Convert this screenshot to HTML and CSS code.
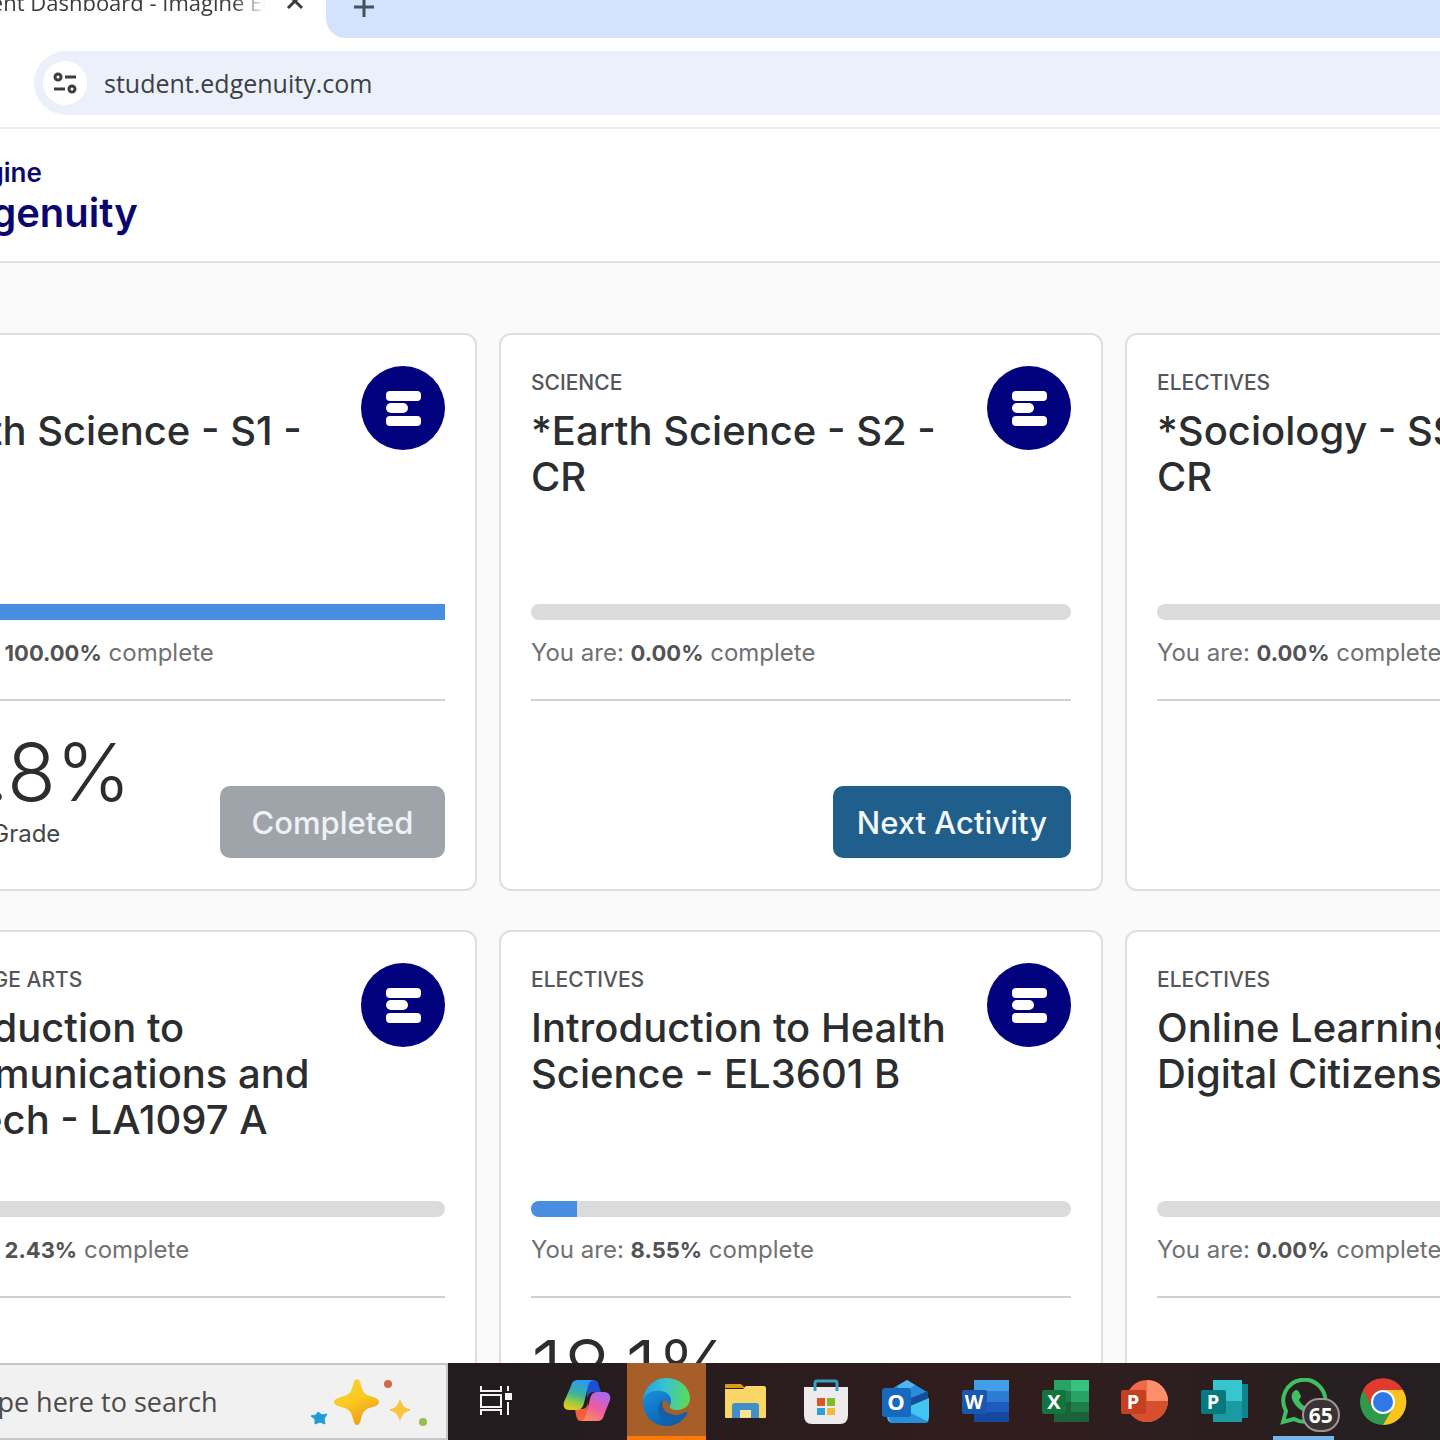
FILE: index.html
```html
<!DOCTYPE html>
<html lang="en">
<head>
<meta charset="utf-8">
<meta name="viewport" content="width=device-width, initial-scale=1">
<title>Student Dashboard - Imagine Edgenuity</title>
<link rel="stylesheet" href="styles.css">
</head>
<body>
<svg class="defs" aria-hidden="true">
  <symbol id="course-icon" viewBox="0 0 84 84">
    <circle cx="42" cy="42" r="42" fill="#02027f"/>
    <rect x="25" y="25" width="35" height="10" rx="4" fill="#fff"/>
    <rect x="25" y="37" width="22" height="10" rx="5" fill="#fff"/>
    <rect x="25" y="50" width="35" height="10" rx="4" fill="#fff"/>
  </symbol>
</svg>

<div class="browser">
  <div class="tabs">
    <div class="tab">
      <span class="tab-title">Student Dashboard - Imagine Edgenuity</span>
      <button class="tab-button" aria-label="Close tab"><svg width="18" height="18" viewBox="0 0 18 18"><path d="M2 2l14 14M16 2L2 16" stroke="#3a3c3e" stroke-width="3"/></svg></button>
    </div>
    <div class="strip">
      <button class="tab-button" aria-label="New tab"><svg width="20" height="20" viewBox="0 0 20 20"><path d="M10 0v20M0 10h20" stroke="#45505f" stroke-width="3"/></svg></button>
    </div>
  </div>
  <div class="toolbar">
    <div class="address">
      <button class="site-info" aria-label="View site information">
        <svg width="26" height="26" viewBox="0 0 26 26" fill="none" stroke="#3c3e42" stroke-width="3"><circle cx="6" cy="7" r="3"/><path d="M13 7h11M2 19h11"/><circle cx="20" cy="19" r="3"/></svg>
      </button>
      <input class="url" type="text" value="student.edgenuity.com" aria-label="Address bar">
    </div>
  </div>
</div>

<header class="site-header">
  <a class="brand" href="#"><span class="brand-top">Imagine</span><span class="brand-name">Edgenuity</span></a>
</header>

<main class="dashboard">
  <div class="courses">
    <article class="card">
      <div class="card-head">
        <div><p class="subject">SCIENCE</p><h2 class="title">*Earth Science - S1 -<br>CR</h2></div>
        <svg class="badge"><use href="#course-icon"/></svg>
      </div>
      <div class="progress" role="progressbar" aria-label="Course progress" aria-valuenow="100"><div class="fill" style="width:100%"></div></div>
      <p class="status">You are: <strong>100.00%</strong> complete</p>
      <div class="card-foot">
        <div><p class="score">97.8%</p><p class="caption">Overall Grade</p></div>
        <button class="action done">Completed</button>
      </div>
    </article>
    <article class="card">
      <div class="card-head">
        <div><p class="subject">SCIENCE</p><h2 class="title">*Earth Science - S2 -<br>CR</h2></div>
        <svg class="badge"><use href="#course-icon"/></svg>
      </div>
      <div class="progress" role="progressbar" aria-label="Course progress" aria-valuenow="0"></div>
      <p class="status">You are: <strong>0.00%</strong> complete</p>
      <div class="card-foot"><button class="action">Next Activity</button></div>
    </article>
    <article class="card">
      <div class="card-head">
        <div><p class="subject">ELECTIVES</p><h2 class="title">*Sociology - SS2 -<br>CR</h2></div>
        <svg class="badge"><use href="#course-icon"/></svg>
      </div>
      <div class="progress" role="progressbar" aria-label="Course progress" aria-valuenow="0"></div>
      <p class="status">You are: <strong>0.00%</strong> complete</p>
      <div class="card-foot"><button class="action">Next Activity</button></div>
    </article>
    <article class="card">
      <div class="card-head">
        <div><p class="subject">LANGUAGE ARTS</p><h2 class="title">Introduction to<br>Communications and<br>Speech - LA1097 A</h2></div>
        <svg class="badge"><use href="#course-icon"/></svg>
      </div>
      <div class="progress" role="progressbar" aria-label="Course progress" aria-valuenow="2.43"><div class="fill" style="width:2.43%"></div></div>
      <p class="status">You are: <strong>2.43%</strong> complete</p>
      <div class="card-foot"><button class="action">Next Activity</button></div>
    </article>
    <article class="card">
      <div class="card-head">
        <div><p class="subject">ELECTIVES</p><h2 class="title">Introduction to Health<br>Science - EL3601 B</h2></div>
        <svg class="badge"><use href="#course-icon"/></svg>
      </div>
      <div class="progress" role="progressbar" aria-label="Course progress" aria-valuenow="8.55"><div class="fill" style="width:8.55%"></div></div>
      <p class="status">You are: <strong>8.55%</strong> complete</p>
      <div class="card-foot">
        <div><p class="score">18.1%</p><p class="caption">Overall Grade</p></div>
        <button class="action">Next Activity</button>
      </div>
    </article>
    <article class="card">
      <div class="card-head">
        <div><p class="subject">ELECTIVES</p><h2 class="title">Online Learning and<br>Digital Citizenship</h2></div>
        <svg class="badge"><use href="#course-icon"/></svg>
      </div>
      <div class="progress" role="progressbar" aria-label="Course progress" aria-valuenow="0"></div>
      <p class="status">You are: <strong>0.00%</strong> complete</p>
      <div class="card-foot"><button class="action">Next Activity</button></div>
    </article>
  </div>
</main>

<footer class="taskbar">
  <div class="search">
    <input class="search-input" type="text" placeholder="Type here to search" aria-label="Search">
    <svg class="sparkles" width="120" height="52" viewBox="0 0 120 52">
      <defs><linearGradient id="gold" x1="0" y1="0" x2="0.5" y2="1"><stop offset="0" stop-color="#fbd43c"/><stop offset="0.55" stop-color="#fbc920"/><stop offset="1" stop-color="#eda01c"/></linearGradient></defs>
      <path d="M47 3c2 0 3 2 4 6 2 8 4 10 12 12 4 1 6 3 6 5s-2 4-6 5c-8 2-10 4-12 12-1 4-2 6-4 6s-3-2-4-6c-2-8-4-10-12-12-4-1-7-3-7-5s3-4 7-5c8-2 10-4 12-12 1-4 2-6 4-6z" fill="url(#gold)"/>
      <path d="M90 24c2 6 4 8 10 10-6 2-8 4-10 10-2-6-4-8-10-10 6-2 8-4 10-10z" fill="#f9c33a" stroke="#f9c33a" stroke-width="1"/>
      <path d="M8 36l4 3 5-1-3 5 1 5-5-2-5 2 0-5-4-3 5-1z" fill="#1e9cd9" stroke="#1e9cd9" stroke-width="1" stroke-linejoin="round"/>
      <circle cx="78" cy="8" r="4" fill="#d0694a"/><circle cx="113" cy="46" r="4" fill="#94bd52"/>
    </svg>
  </div>
  <button class="task task-view" aria-label="Task view">
    <svg class="icon" viewBox="0 0 48 48" fill="none" stroke="#f4f2f2" stroke-width="2"><path d="M11 8v5h20V8M11 37v-5h20v5"/><rect x="11" y="17" width="20" height="12"/><path d="M38 8v5M38 24v13"/><rect x="36" y="16" width="5" height="5" fill="#fff"/></svg>
  </button>
  <nav class="apps" aria-label="Pinned apps">
    <button class="task" aria-label="Copilot"><svg class="icon" viewBox="0 0 48 48">
      <defs>
        <linearGradient id="cpl" x1="0.5" y1="0" x2="0.2" y2="1"><stop offset="0" stop-color="#2b9af0"/><stop offset="0.45" stop-color="#3bb39a"/><stop offset="0.75" stop-color="#9fce3c"/><stop offset="1" stop-color="#f2c41f"/></linearGradient>
        <linearGradient id="cpr" x1="0.7" y1="0" x2="0.2" y2="1"><stop offset="0" stop-color="#a76af3"/><stop offset="0.5" stop-color="#ee5aa4"/><stop offset="1" stop-color="#fb8d5c"/></linearGradient>
      </defs>
      <path d="M24 2h6c4 0 5 2 6 6l2 6h-7c-4 0-6 3-7 6z" fill="#1d4fcf"/>
      <path d="M24 43h-6c-3 0-4-2-5-6l-1-6h7c4 0 5-3 6-6z" fill="#f2603c"/>
      <path d="M15 2h16c-4 1-5 3-6 6l-4 17c-1 4-3 7-7 7H6c-5 0-6-4-5-8L8 8c1-4 3-6 7-6z" fill="url(#cpl)"/>
      <path d="M34 43H18c3-1 4-3 5-6l4-16c1-4 3-7 7-7h7c5 0 7 4 6 8l-6 15c-1 4-3 6-7 6z" fill="url(#cpr)"/>
    </svg></button>
    <button class="task current" aria-label="Microsoft Edge"><svg class="icon" viewBox="0 0 48 48">
      <defs>
        <linearGradient id="edt" x1="0" y1="0.5" x2="1" y2="0.6"><stop offset="0" stop-color="#22a4dc"/><stop offset="0.45" stop-color="#39c3cf"/><stop offset="1" stop-color="#5fdb52"/></linearGradient>
        <linearGradient id="edb" x1="0" y1="0" x2="0.7" y2="1"><stop offset="0" stop-color="#1b8fdc"/><stop offset="1" stop-color="#0b5bac"/></linearGradient>
      </defs>
      <path d="M1 24C1 11 11 0 24 0c14 0 24 10 24 20 0 8-6 12-13 12-5 0-8-2-7-4 2-3 2-13-8-14C10 13 2 18 1 24z" fill="url(#edt)"/>
      <path d="M1 24c0-7 8-12 17-11 8 0 12 7 11 11-1 2-2 3-2 3-1-3-4-5-6-4-3 4-1 12 8 14 6 2 12 0 15-3 1 0 2 1 1 2-4 7-11 12-20 12C11 48 1 38 1 24z" fill="url(#edb)"/>
      <path d="M21 22c-8 5-6 18 6 23 5 2 12-1 17-8 1-1 1-3-1-3-4 3-9 4-14 2-8-2-10-8-8-14z" fill="#1261a8"/>
    </svg></button>
    <button class="task" aria-label="File Explorer"><svg class="icon" viewBox="0 0 48 48">
      <path d="M3 7q0-1 1-1h15l4 4H3z" fill="#d99a1c"/><path d="M3 11h18l3-3h18q2 0 2 2v29q0 1-1 1H4q-1 0-1-1z" fill="#fad667"/>
      <path d="M10 40V28q0-3 3-3h21q3 0 3 3v12h-8v-8H18v8z" fill="#3f8fc8"/><path d="M18 32h11v7H18z" fill="#fbe298"/>
    </svg></button>
    <button class="task" aria-label="Microsoft Store"><svg class="icon" viewBox="0 0 48 48">
      <path d="M2 9h44v28q0 9-8 9H10q-8 0-8-9z" fill="#edebeb"/><path d="M13 13V5q0-2 2-2h18q2 0 2 2v8" fill="none" stroke="#3a9fc2" stroke-width="3"/>
      <path d="M15 20h8v8h-8z" fill="#e0512e"/><path d="M25 20h8v8h-8z" fill="#84b92a"/><path d="M15 30h8v7h-8z" fill="#2f9fdc"/><path d="M25 30h8v7h-8z" fill="#efb93c"/>
    </svg></button>
    <button class="task" aria-label="Outlook"><svg class="icon" viewBox="0 0 48 48">
      <path d="M7 13L26 2l20 12v8H7z" fill="#2b8bdc"/><path d="M16 8l10-6 8 5-12 8z" fill="#52b4ee"/><path d="M30 20l17-7v10L26 36z" fill="#164f99"/>
      <path d="M6 38l42-18v19q0 6-6 6H12q-6 0-6-7z" fill="#42c5f3"/><path d="M8 36l16-4 24 12-4 1H12q-5-1-4-9z" fill="#268fdc"/>
      <rect x="1" y="10" width="29" height="29" rx="3" fill="#1669bd"/><text class="glyph" x="15" y="32" font-size="22">O</text>
    </svg></button>
    <button class="task" aria-label="Word"><svg class="icon" viewBox="0 0 48 48">
      <path d="M13 2h35v11H13z" fill="#439ee8"/><path d="M13 13h35v11H13z" fill="#2d7bd3"/><path d="M13 24h35v10H13z" fill="#1d5cbe"/><path d="M13 34h35v10H13z" fill="#1648a0"/>
      <rect x="1" y="12" width="25" height="24" rx="2" fill="#1b57b0"/><text class="glyph" x="13" y="31" font-size="19">W</text>
    </svg></button>
    <button class="task" aria-label="Excel"><svg class="icon" viewBox="0 0 48 48">
      <path d="M13 2h17v11H13z" fill="#27a366"/><path d="M30 2h18v11H30z" fill="#35c27e"/><path d="M13 13h17v11H13z" fill="#1f7d49"/><path d="M30 13h18v11H30z" fill="#27a366"/><path d="M13 24h17v20H13z" fill="#1b6239"/><path d="M30 24h18v10H30z" fill="#1f7d49"/><path d="M30 34h18v10H30z" fill="#1b6239"/>
      <rect x="1" y="12" width="24" height="24" rx="2" fill="#127540"/><text class="glyph" x="13" y="31" font-size="20">X</text>
    </svg></button>
    <button class="task" aria-label="PowerPoint"><svg class="icon" viewBox="0 0 48 48">
      <circle cx="27" cy="23" r="21" fill="#ed6c47"/><path d="M27 2a21 21 0 0 1 21 21H27z" fill="#ff8f6b"/><path d="M48 23a21 21 0 0 1-42 0z" fill="#d6502f"/>
      <rect x="1" y="12" width="25" height="24" rx="2" fill="#c53f22"/><text class="glyph" x="13" y="31" font-size="20">P</text>
    </svg></button>
    <button class="task" aria-label="Publisher"><svg class="icon" viewBox="0 0 48 48">
      <path d="M40 6h8v34h-8z" fill="#12838a"/><path d="M13 2h29v21H13z" fill="#37c6d0"/><path d="M13 23h29v21H13z" fill="#1a9ba2"/>
      <rect x="1" y="12" width="25" height="24" rx="2" fill="#07797f"/><text class="glyph" x="13" y="31" font-size="20">P</text>
    </svg></button>
    <button class="task open" aria-label="WhatsApp, 65 unread"><svg class="icon" viewBox="0 0 48 48">
      <path d="M3 44l3-11A21 21 0 1 1 14 41z" fill="none" stroke="#3fbf5f" stroke-width="4"/>
      <path d="M14 13c2-2 4-1 5 1l2 4c0 2-2 3-2 4 2 4 5 6 8 8 2 0 3-3 5-2l5 3-2 4c-3 3-8 2-14-3-6-4-13-13-7-19z" fill="#3fbf5f"/>
    </svg><span class="count">65</span></button>
    <button class="task" aria-label="Chrome"><svg class="icon" viewBox="0 0 48 48">
      <circle cx="24" cy="24" r="23" fill="#2f9a4b"/><path d="M4 12A23 23 0 0 1 44 12H24a12 12 0 0 0-11 17z" fill="#e03b30"/><path d="M24 12h20a23 23 0 0 1-20 35l10-17a12 12 0 0 0-10-18z" fill="#fbc41c"/>
      <circle cx="24" cy="24" r="12" fill="#fff"/><circle cx="24" cy="24" r="10" fill="#2f78e8"/>
    </svg></button>
  </nav>
</footer>
</body>
</html>
```

FILE: styles.css
```css
* { box-sizing: border-box; }
html, body { height: 100%; }
body {
  margin: 0;
  display: flex;
  flex-direction: column;
  overflow: hidden;
  background: #fff;
  color: #2b2d2e;
  font-family: Inter, "Liberation Sans", sans-serif;
}
p, h2 { margin: 0; }
button { border: 0; padding: 0; background: none; font: inherit; color: inherit; }
svg { display: block; flex: none; }
.defs { position: absolute; width: 0; height: 0; }

/* Browser chrome */
.browser {
  flex: none;
  border-bottom: 2px solid #e9eaec;
  font-family: "Open Sans", "Noto Sans", sans-serif;
}
.tabs { display: flex; height: 38px; overflow: hidden; background: #fff; }
.tab { flex: none; width: 326px; display: flex; justify-content: space-between; padding-right: 22px; margin-top: -16px; }
.tab-title {
  margin-left: -56px;
  margin-right: 20px;
  flex: 1;
  overflow: hidden;
  white-space: nowrap;
  font-size: 22px;
  line-height: 36px;
  color: #3a3c3e;
  -webkit-mask-image: linear-gradient(to left, transparent, #000 32px);
  mask-image: linear-gradient(to left, transparent, #000 32px);
}
.tab-button { align-self: flex-start; margin-top: 8px; }
.strip { flex: 1; padding-left: 28px; background: #d3e2fd; border-bottom-left-radius: 20px; }
.strip .tab-button { margin-top: -8px; }
.toolbar { padding: 13px 0 12px 34px; }
.address {
  display: flex;
  align-items: center;
  height: 64px;
  padding-left: 9px;
  gap: 17px;
  background: #ecf0fa;
  border-radius: 32px 0 0 32px;
}
.site-info { width: 44px; height: 44px; display: grid; place-items: center; border-radius: 50%; background: #fff; }
.url { flex: 1; border: 0; padding: 0; background: none; font: 25px/36px "Open Sans", "Noto Sans", sans-serif; color: #3b3f45; }

/* Site header */
.site-header { flex: none; height: 134px; padding-top: 28px; border-bottom: 2px solid #e1e1e2; overflow: hidden; }
.brand { display: flex; flex-direction: column; width: 220px; margin-left: -58px; color: #0b0770; text-decoration: none; }
.brand-top { font-size: 26px; line-height: 32px; font-weight: 600; }
.brand-name { font-size: 40px; line-height: 48px; font-weight: 600; }

/* Course grid */
.dashboard { flex: 1; min-height: 0; overflow: hidden; padding-top: 70px; background: #fafafa; }
.courses {
  display: grid;
  grid-template-columns: repeat(3, 1fr);
  gap: 39px 22px;
  margin: 0 -289px 0 -127px;
}
.card { padding: 31px 30px; background: #fff; border: 2px solid #dedede; border-radius: 12px; }
.card-head { display: flex; justify-content: space-between; min-height: 238px; }
.badge { width: 84px; height: 84px; }
.subject { font-size: 21px; line-height: 34px; font-weight: 500; color: #54565a; white-space: nowrap; }
.title { margin-top: 8px; font-size: 40px; line-height: 46px; font-weight: 500; white-space: nowrap; }
.progress { height: 16px; border-radius: 8px; background: #dbdbdb; }
.fill { height: 16px; border-radius: 8px 0 0 8px; background: #478ee0; }
.status { margin: 17px 0 30px; font-size: 24px; line-height: 32px; color: #6f7173; white-space: nowrap; }
.status strong { color: #515355; font-size: 22px; font-weight: 700; }
.card-foot {
  display: flex;
  align-items: flex-end;
  justify-content: space-between;
  min-height: 159px;
  border-top: 2px solid #cfcfcf;
}
.score { font-size: 80px; line-height: 92px; font-weight: 300; }
.caption { padding-bottom: 8px; font-size: 24px; line-height: 32px; color: #444648; }
.action {
  min-width: 225px;
  height: 72px;
  margin-left: auto;
  padding: 0 24px;
  border-radius: 10px;
  background: #205e8b;
  color: #f3f8fc;
  font-size: 31px;
  font-weight: 500;
}
.done { background: #9fa4aa; color: #eff2f5; }

/* Taskbar */
.taskbar { flex: none; display: flex; height: 77px; background: linear-gradient(to right, #231c1f 35%, #321d1d 70%, #241f22); }
.search {
  flex: none;
  display: flex;
  align-items: center;
  justify-content: space-between;
  width: 448px;
  padding-right: 16px;
  overflow: hidden;
  background: #f1f1f1;
  border: 2px solid #c6c6c6;
  border-left: 0;
}
.search-input {
  width: 300px;
  margin-left: -31px;
  border: 0;
  padding: 0;
  background: none;
  font: 27px/36px "Open Sans", "Noto Sans", sans-serif;
}
.search-input::placeholder { color: #4b4b4b; opacity: 1; }
.task { position: relative; display: grid; place-items: center; }
.task-view { flex: none; width: 92px; margin-right: 7px; }
.apps { flex: 1; display: grid; grid-template-columns: repeat(11, 1fr); margin-right: 17px; }
.icon { width: 48px; height: 48px; }
.glyph { fill: #fff; font-family: "Open Sans", sans-serif; font-weight: 700; text-anchor: middle; }
.current { background: #a65f28; border-bottom: 4px solid #fb7a0a; border-top: 4px solid #a65f28; }
.open::after { content: ""; position: absolute; left: 9px; right: 9px; bottom: 0; height: 4px; background: #76b5ea; }
.count {
  position: absolute;
  left: 38px;
  top: 35px;
  width: 38px;
  height: 34px;
  border: 2px solid #9b9695;
  border-radius: 17px;
  background: #393334;
  color: #fff;
  font: 700 21px/30px "Open Sans", sans-serif;
  text-align: center;
}
```
